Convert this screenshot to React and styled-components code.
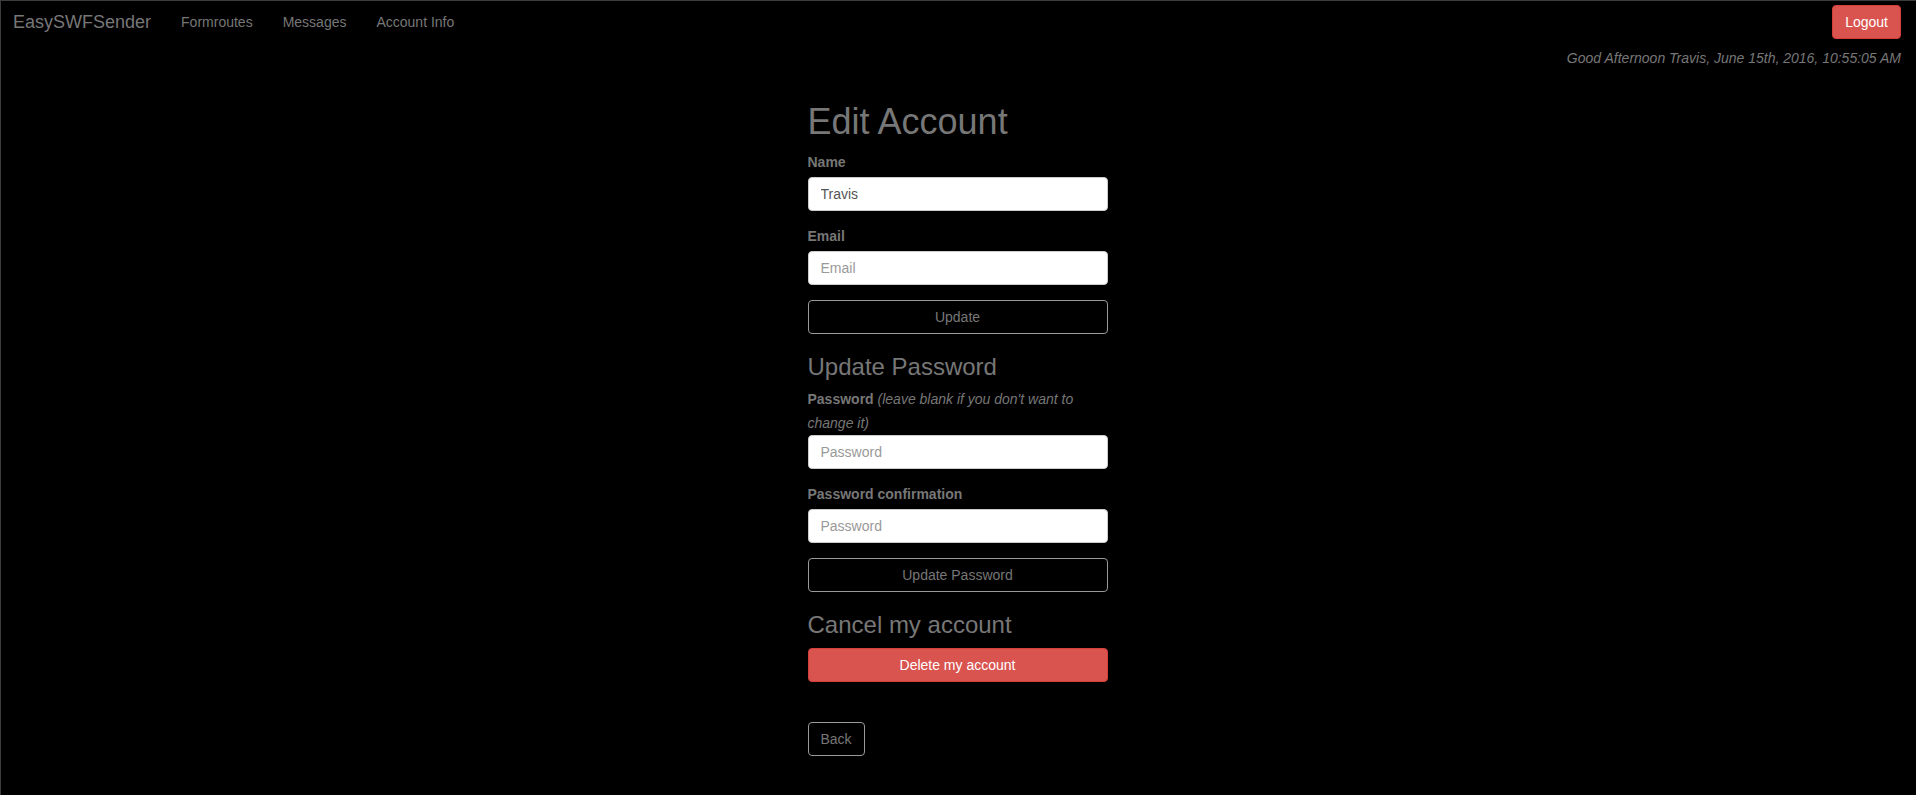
import styled, { createGlobalStyle } from 'styled-components';

const GlobalStyle = createGlobalStyle`
    html, body {
        margin: 0;
        padding: 0;
        background: #000;
    }
    body {
        font-family: "Liberation Sans", Arial, sans-serif;
        font-size: 14px;
        line-height: 20px;
        color: #777;
    }
    * {
        box-sizing: border-box;
    }
`;

const Page = styled.div`
    min-height: 100vh;
    background: #000;
    border-top: 1px solid #3c3c3c;
    border-left: 1px solid #3c3c3c;
`;

const Navbar = styled.nav`
    display: flex;
    align-items: flex-start;
    height: 47px;
    padding-right: 15px;
`;

const Brand = styled.a`
    font-size: 18px;
    line-height: 20px;
    padding: 11px 15px 0 12px;
    color: #777;
    text-decoration: none;
    cursor: pointer;
`;

const NavLinks = styled.ul`
    display: flex;
    list-style: none;
    margin: 0;
    padding: 0;
    flex: 1;
`;

const NavLink = styled.li`
    padding: 11px 15px 0;
    line-height: 20px;
    color: #777;
    cursor: pointer;
`;

const Button = styled.button`
    display: ${props => props.block ? 'block' : 'inline-block'};
    width: ${props => props.block ? '100%' : 'auto'};
    height: 34px;
    padding: 6px 12px;
    font-family: inherit;
    font-size: 14px;
    line-height: 20px;
    border-radius: 4px;
    cursor: pointer;
    background: ${props => props.danger ? '#d9534f' : 'transparent'};
    border: 1px solid ${props => props.danger ? '#d43f3a' : '#9a9a9a'};
    color: ${props => props.danger ? '#fff' : '#777'};
    margin-top: ${props => props.nav ? '4px' : '0'};
`;

const Greeting = styled.div`
    text-align: right;
    font-style: italic;
    padding-right: 15px;
    line-height: 20px;
`;

const Main = styled.main`
    width: 300px;
    margin-left: calc(50% - 151px);
    padding-top: 14px;
`;

const Title = styled.h1`
    font-size: 36px;
    line-height: 1.1;
    font-weight: 500;
    margin: 20px 0 10px;
    color: #777;
`;

const Subtitle = styled.h3`
    font-size: 24px;
    line-height: 1.1;
    font-weight: 500;
    margin: 20px 0 10px;
    color: #777;
`;

const FormGroup = styled.div`
    margin-bottom: 15px;
`;

const Label = styled.label`
    display: block;
    font-weight: bold;
    line-height: ${props => props.wrap ? '24px' : '20px'};
    margin: ${props => props.wrap ? '-3px 0 0' : '0 0 5px'};
    color: #777;
`;

const Hint = styled.em`
    font-weight: normal;
`;

const Input = styled.input`
    display: block;
    width: 100%;
    height: 34px;
    padding: 6px 12px;
    font-family: inherit;
    font-size: 14px;
    color: #555;
    background: #fff;
    border: 1px solid #ccc;
    border-radius: 4px;
    outline: none;
    &::placeholder {
        color: #999;
    }
`;

const BackRow = styled.div`
    margin-top: 40px;
`;

const App = () => {
    return (
        <Page>
            <GlobalStyle />
            <Navbar>
                <Brand>EasySWFSender</Brand>
                <NavLinks>
                    <NavLink>Formroutes</NavLink>
                    <NavLink>Messages</NavLink>
                    <NavLink>Account Info</NavLink>
                </NavLinks>
                <Button danger nav>Logout</Button>
            </Navbar>
            <Greeting>Good Afternoon Travis, June 15th, 2016, 10:55:05 AM</Greeting>
            <Main>
                <Title>Edit Account</Title>
                <FormGroup>
                    <Label>Name</Label>
                    <Input defaultValue="Travis" />
                </FormGroup>
                <FormGroup>
                    <Label>Email</Label>
                    <Input placeholder="Email" />
                </FormGroup>
                <Button block>Update</Button>

                <Subtitle>Update Password</Subtitle>
                <FormGroup>
                    <Label wrap>Password <Hint>(leave blank if you don't want to change it)</Hint></Label>
                    <Input type="password" placeholder="Password" />
                </FormGroup>
                <FormGroup>
                    <Label>Password confirmation</Label>
                    <Input type="password" placeholder="Password" />
                </FormGroup>
                <Button block>Update Password</Button>

                <Subtitle>Cancel my account</Subtitle>
                <Button block danger>Delete my account</Button>

                <BackRow>
                    <Button>Back</Button>
                </BackRow>
            </Main>
        </Page>
    );
};

export default App;
